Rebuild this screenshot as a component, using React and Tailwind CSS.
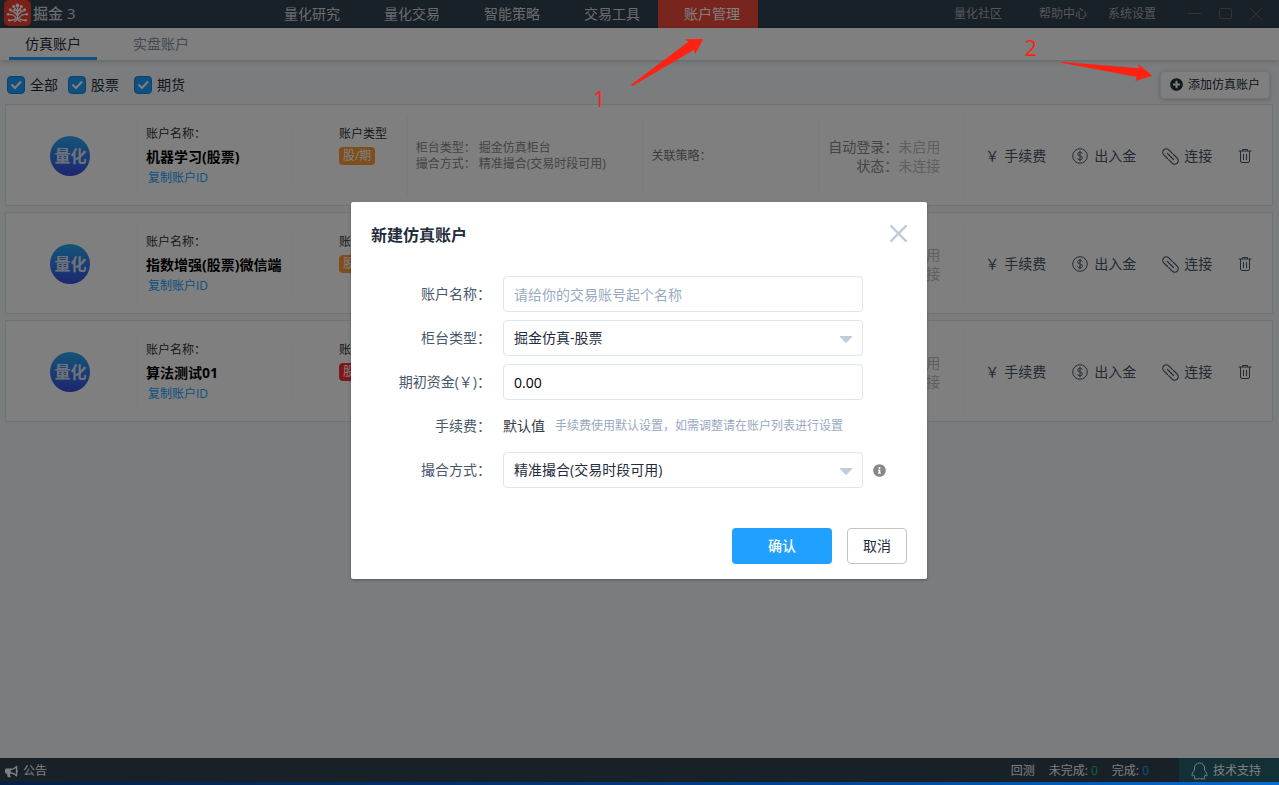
import React, { useState } from 'react';
import { FaBullhorn, FaInfoCircle, FaPlusCircle } from 'react-icons/fa';

const navItems = ['量化研究', '量化交易', '智能策略', '交易工具', '账户管理'];

const accounts = [
  { id: 1, name: '机器学习(股票)', type: '股/期', badge: 'bg-[#ff9c3a]' },
  { id: 2, name: '指数增强(股票)微信端', type: '股/期', badge: 'bg-[#ff9c3a]' },
  { id: 3, name: '算法测试01', type: '股票', badge: 'bg-[#ff2d36]' },
];

const LogoIcon = () => (
  <svg className="w-[27px] h-[26px]" viewBox="0 0 27 26" fill="none">
    <rect width="27" height="26" rx="5" fill="#f5402f" />
    <g stroke="#fff" strokeWidth="1.300" strokeLinecap="round">
      <path d="M13.500 19V8M13.500 16c-1.500-3-4-5-7-5.500M13.500 16c1.500-3 4-5 7-5.500M13.500 12.500c-.8-2.500-2-4-3.500-5M13.500 12.500c.8-2.500 2-4 3.500-5" />
      <path d="M4 14.500c3.500-.5 6.500 1 8 3.500M23 14.500c-3.500-.5-6.500 1-8 3.500M6 20.500c2.500-.3 5-1 7.500-2.500 2.500 1.500 5 2.200 7.500 2.500M10.500 21.500l3-2 3 2" />
    </g>
    <g fill="#fff">
      <circle cx="13.500" cy="5.500" r="1.900" />
      <circle cx="9.600" cy="6.500" r="1.500" />
      <circle cx="17.400" cy="6.500" r="1.500" />
      <circle cx="6.300" cy="9.800" r="1.500" />
      <circle cx="20.700" cy="9.800" r="1.500" />
      <circle cx="10.500" cy="10" r="1.200" />
      <circle cx="16.500" cy="10" r="1.200" />
      <circle cx="4.200" cy="14.300" r="1.300" />
      <circle cx="22.800" cy="14.300" r="1.300" />
      <circle cx="5.200" cy="20.300" r="1.200" />
      <circle cx="21.800" cy="20.300" r="1.200" />
    </g>
  </svg>
);

const DollarIcon = () => (
  <svg className="w-4 h-4" viewBox="0 0 16 16" fill="none" stroke="currentColor">
    <circle cx="8" cy="8" r="7.300" />
    <path d="M10.300 5.800c-.2-1-1.100-1.600-2.300-1.600s-2.300.6-2.300 1.800c0 2.600 4.700 1.300 4.700 4 0 1.200-1.100 1.900-2.400 1.900s-2.300-.7-2.500-1.800M8 2.800v10.400" />
  </svg>
);

const ClipIcon = () => (
  <svg className="w-[17px] h-[17px]" viewBox="0 0 17 17" fill="none" stroke="currentColor" strokeWidth="1.200" strokeLinecap="round">
    <path d="M10.300 5.300L6.800 1.800a3.500 3.500 0 0 0-5 5l3.700 3.700M5.500 5.500l3.400 3.400" />
    <path d="M6.700 11.700l3.500 3.500a3.500 3.500 0 0 0 5-5l-3.700-3.700M8.900 8.900l2.600 2.600" />
  </svg>
);

const TrashIcon = () => (
  <svg className="w-[14px] h-4" viewBox="0 0 14 16" fill="none" stroke="currentColor">
    <path d="M.5 3h13M4.500 3V1.500h5V3M2.500 3v10a1.500 1.500 0 0 0 1.500 1.500h6a1.500 1.500 0 0 0 1.500-1.500V3M5.500 6v6M8.500 6v6" />
  </svg>
);

const PenguinIcon = () => (
  <svg className="w-[17px] h-[18px]" viewBox="0 0 17 18" fill="none" stroke="currentColor" strokeLinejoin="round">
    <path d="M8.500 1C5.500 1 3.500 3.300 3.500 6v2C2 10 .8 12 1 13.500c.1.800 1 .6 1.800-.6.2 1 .7 1.700 1.300 2.300-.8.300-1.200.7-1 1.200.4.900 4.200.8 5.400-.1 1.200.9 5 1 5.400.1.200-.5-.2-.9-1-1.200.6-.6 1.100-1.300 1.300-2.300.8 1.200 1.700 1.400 1.800.6.200-1.500-1-3.500-2.500-5.500V6c0-2.700-2-5-5-5z" />
  </svg>
);

function FilterCheckbox({ label, className }) {
  const [checked, setChecked] = useState(true);

  return (
    <label className={`flex items-center gap-[5px] ${className}`}>
      <span className="relative flex">
        <input
          type="checkbox"
          checked={checked}
          onChange={() => setChecked(!checked)}
          className="appearance-none w-[18px] h-[18px] rounded border border-[#0c84e8] bg-white checked:bg-[#20a0ff]"
        />
        {checked && (
          <svg className="absolute inset-0 w-[18px] h-[18px] pointer-events-none" viewBox="0 0 18 18" fill="none" stroke="#fff" strokeWidth="2">
            <path d="M4.500 8.500l3.500 3.500 6-6.500" />
          </svg>
        )}
      </span>
      {label}
    </label>
  );
}

function AccountCard({ account }) {
  return (
    <li className="grid grid-cols-[132fr_270fr_236fr_176fr_146fr_307fr] items-center h-[102px] pt-[2px] bg-white border border-[#e0e6ed]">
      <div className="h-20 pr-[2px] flex items-center justify-center border-r border-[#f7f7f7]">
        <span className="w-10 h-10 rounded-full bg-linear-to-b from-[#28a8f0] to-[#3a4be0] text-[#dde4f5] text-base font-bold flex items-center justify-center">
          量化
        </span>
      </div>

      <div className="h-20 flex items-center border-r border-[#f7f7f7]">
        <div className="pl-2 pb-[2px] w-[154px] h-[60px] shrink-0 flex flex-col justify-center border-r border-[#f7f7f7] text-xs">
          <p className="leading-[22px] text-[#333]">账户名称：</p>
          <p className="text-sm leading-6 font-bold text-black whitespace-nowrap">{account.name}</p>
          <a href="#" className="pl-[2px] leading-[18px] text-[#20a0ff]">复制账户ID</a>
        </div>
        <div className="pl-[47px] h-[60px] text-xs text-[#333]">
          <p className="leading-4">账户类型</p>
          <span className={`block w-fit mt-[5px] px-1 h-[18px] leading-[18px] rounded-sm text-white whitespace-nowrap ${account.badge}`}>
            {account.type}
          </span>
        </div>
      </div>

      <div className="h-20 pl-2 flex flex-col justify-center border-r border-[#f7f7f7] text-xs leading-4 text-[#888] whitespace-nowrap">
        <p><span className="mr-[3px]">柜台类型：</span>掘金仿真柜台</p>
        <p><span className="mr-[3px]">撮合方式：</span>精准撮合(交易时段可用)</p>
      </div>

      <div className="h-20 pl-2 flex items-center border-r border-[#f7f7f7] text-xs text-[#777]">关联策略：</div>

      <div className="h-20 pr-6 flex flex-col justify-center items-end border-r border-[#f7f7f7] text-sm leading-[19px] text-[#888] whitespace-nowrap">
        <p>自动登录：<span className="text-[#c0c0c0]">未启用</span></p>
        <p>状态：<span className="text-[#c0c0c0]">未连接</span></p>
      </div>

      <div className="pl-5 flex items-center gap-[26px] text-sm text-[#475669] whitespace-nowrap">
        <button className="flex items-center gap-[5px]"><span>￥</span>手续费</button>
        <button className="flex items-center gap-[6px]"><DollarIcon />出入金</button>
        <button className="flex items-center gap-[5px]"><ClipIcon />连接</button>
        <button aria-label="删除"><TrashIcon /></button>
      </div>
    </li>
  );
}

function FormSelect({ id, option }) {
  return (
    <div className="relative w-[360px]">
      <select id={id} className="appearance-none w-full h-9 px-[10px] rounded border border-[#e0e6ed] bg-white text-[#1f2d3d]">
        <option>{option}</option>
      </select>
      <svg className="absolute right-[11px] top-[16px] w-3 h-[7px] pointer-events-none" viewBox="0 0 12 7" fill="#c0ccda">
        <path d="M0 0h12v1L6.500 6.700h-1L0 1z" />
      </svg>
    </div>
  );
}

function FormRow({ label, htmlFor, children }) {
  return (
    <div className="flex items-center h-9">
      <label htmlFor={htmlFor} className="w-[120px] mr-3 text-right text-[#48576a]">{label}</label>
      {children}
    </div>
  );
}

function NewAccountDialog() {
  const [name, setName] = useState('');
  const [funds, setFunds] = useState('0.00');

  return (
    <div role="dialog" aria-label="新建仿真账户" className="w-[576px] px-5 pt-5 pb-[15px] bg-white rounded-xs shadow-[0_1px_3px_rgba(0,0,0,0.3)] text-sm">
      <div className="flex items-center justify-between">
        <h2 className="text-base leading-[26px] font-bold text-[#1f2d3d]">新建仿真账户</h2>
        <button aria-label="关闭" className="-mt-1">
          <svg className="w-[17px] h-[17px]" viewBox="0 0 17 17" fill="none" stroke="#c0ccda" strokeWidth="2.400" strokeLinecap="round">
            <path d="M1.200 1.200l14.600 14.600M15.800 1.200L1.200 15.800" />
          </svg>
        </button>
      </div>

      <div className="mt-7 flex flex-col gap-2">
        <FormRow label="账户名称：" htmlFor="account-name">
          <input
            id="account-name"
            value={name}
            onChange={(e) => setName(e.target.value)}
            placeholder="请给你的交易账号起个名称"
            className="w-[360px] h-9 px-[10px] rounded border border-[#e0e6ed] placeholder:text-[#99a9bf]"
          />
        </FormRow>
        <FormRow label="柜台类型：" htmlFor="counter">
          <FormSelect id="counter" option="掘金仿真-股票" />
        </FormRow>
        <FormRow label="期初资金(￥)：" htmlFor="funds">
          <input
            id="funds"
            value={funds}
            onChange={(e) => setFunds(e.target.value)}
            className="w-[360px] h-9 px-[10px] rounded border border-[#e0e6ed] text-black"
          />
        </FormRow>
        <FormRow label="手续费：">
          <span className="text-[#333c48]">默认值</span>
          <span className="ml-[10px] text-xs text-[#99a9bf]">手续费使用默认设置，如需调整请在账户列表进行设置</span>
        </FormRow>
        <FormRow label="撮合方式：" htmlFor="match">
          <FormSelect id="match" option="精准撮合(交易时段可用)" />
          <FaInfoCircle className="ml-[10px] w-[13px] h-[13px] text-[#888]" />
        </FormRow>
      </div>

      <div className="mt-10 flex justify-end gap-[15px]">
        <button className="w-[100px] h-9 rounded bg-[#20a0ff] text-white font-medium">确认</button>
        <button className="w-[60px] h-9 rounded border border-[#c4c4c4] text-[#1f2d3d]">取消</button>
      </div>
    </div>
  );
}

export default function App() {
  return (
    <div className="h-screen flex flex-col overflow-hidden font-['Open_Sans','Noto_Sans_CJK_SC',sans-serif]">
      <div className="relative flex-1 min-h-0 flex flex-col bg-[#f5f8fb]">
        <header className="flex h-7 shrink-0 bg-[#304050] text-[#d5d8dc] whitespace-nowrap">
          <div className="w-[258px] pl-1 flex items-start gap-[2px] text-[15px] leading-[26px] font-medium">
            <LogoIcon />
            <span>掘金 3</span>
          </div>
          <nav className="flex text-sm leading-7">
            {navItems.map((item) => (
              <a
                key={item}
                href="#"
                className={`w-[100px] pl-[26px] ${item === '账户管理' ? 'bg-[#f04b3c] text-white' : ''}`}
              >
                {item}
              </a>
            ))}
          </nav>
          <div className="ml-auto pr-[17px] flex items-center text-xs text-[#a8adb3]">
            <a href="#" className="mr-[37px]">量化社区</a>
            <a href="#" className="mr-[21px]">帮助中心</a>
            <a href="#" className="mr-8">系统设置</a>
            <div className="flex items-center gap-[18px] text-[#666b70]">
              <button aria-label="最小化">
                <svg className="w-[13px] h-3" viewBox="0 0 13 12" stroke="currentColor"><path d="M0 5.500h13" /></svg>
              </button>
              <button aria-label="最大化">
                <svg className="w-[13px] h-3" viewBox="0 0 13 12" fill="none" stroke="currentColor"><rect x=".5" y=".5" width="12" height="10" rx="1" /></svg>
              </button>
              <button aria-label="关闭窗口">
                <svg className="w-3 h-3" viewBox="0 0 12 12" stroke="currentColor"><path d="M.5.5l11 11M11.500.5l-11 11" /></svg>
              </button>
            </div>
          </div>
        </header>

        <div className="flex gap-5 h-8 pl-[9px] shrink-0 bg-white shadow-[0_1px_5px_rgba(0,0,0,0.2)] text-sm">
          <button className="px-4 pt-[2px] border-b-3 border-[#20a0ff] text-[#1f2d3d]">仿真账户</button>
          <button className="px-4 pt-[2px] border-b-3 border-transparent text-[#8492a6]">实盘账户</button>
        </div>

        <div className="flex items-center h-11 pt-[6px] pb-px pl-[7px] pr-[9px] shrink-0 text-sm text-[#222c38]">
          <FilterCheckbox label="全部" className="mr-[10px]" />
          <FilterCheckbox label="股票" className="mr-[15px]" />
          <FilterCheckbox label="期货" className="" />
          <button className="ml-auto h-7 px-[9px] flex items-center gap-[5px] rounded-sm border border-[#e5e9f2] bg-white shadow-[0_1px_4px_rgba(0,0,0,0.2)] text-xs">
            <FaPlusCircle className="w-[13px] h-[13px]" />
            添加仿真账户
          </button>
        </div>

        <ul className="flex flex-col gap-[6px] pl-[5px] pr-[6px]">
          {accounts.map((account) => (
            <AccountCard key={account.id} account={account} />
          ))}
        </ul>

        <footer className="mt-auto flex items-center h-6 pl-[5px] shrink-0 bg-[#304050] text-xs text-white">
          <button className="pt-[2px] flex items-center gap-[5px]">
            <FaBullhorn className="w-[13px] h-[13px]" />
            公告
          </button>
          <div className="ml-auto pt-[2px] flex items-center gap-[14px]">
            <span>回测</span>
            <span>未完成: <span className="text-[#13ce66]">0</span></span>
            <span>完成: <span className="text-[#20a0ff]">0</span></span>
          </div>
          <button className="ml-[30px] w-[100px] h-full pl-3 pt-[2px] flex items-center gap-[5px] bg-[#24606c]">
            <PenguinIcon />
            技术支持
          </button>
        </footer>

        <div className="absolute inset-0 pr-px pb-px flex items-center justify-center bg-black/50">
          <NewAccountDialog />
        </div>

        {/* step hints */}
        <svg className="absolute left-[630px] top-[38px] w-[74px] h-12" viewBox="630 38 74 48" fill="#ff2213">
          <path d="M630.800 85l57.900-43.500-4.400-2.300 19-.2-8 15-1.600-4-61.200 36z" />
        </svg>
        <span className="absolute left-[593px] top-[84px] text-[22px] leading-7 text-[#ff2213]">1</span>
        <svg className="absolute right-[126px] top-[61px] w-[93px] h-[21px]" viewBox="1060 61 93 21" fill="#ff2213">
          <path d="M1061 61.700l78.300 6.600-1.300-4.300 14.500 11.800-17.200 5.300 1.700-4-76-14.400z" />
        </svg>
        <span className="absolute right-[242px] top-[33px] text-[22px] leading-7 text-[#ff2213]">2</span>
      </div>
      <div className="h-[3px] shrink-0 bg-linear-to-r from-[#01204a] via-[#02397c] to-[#0a6bd0]" />
    </div>
  );
}
